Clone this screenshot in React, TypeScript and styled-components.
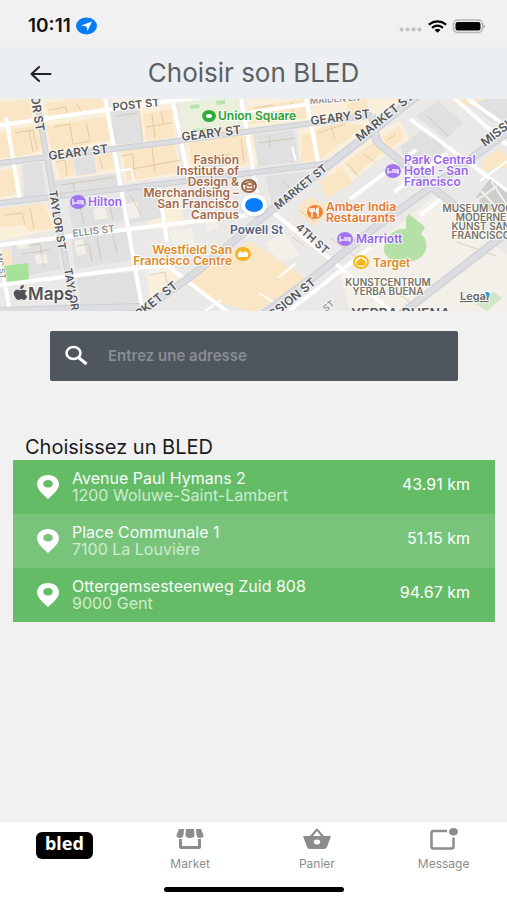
import React from "react";
import styled, { createGlobalStyle } from "styled-components";

const GlobalStyle = createGlobalStyle`
  * { box-sizing: border-box; }
  body { margin: 0; background: #f1f1f1; font-family: Inter, "Liberation Sans", sans-serif; }
  h1, h2, p, ul { margin: 0; padding: 0; font-weight: 400; }
  button { border: 0; padding: 0; background: none; font: inherit; color: inherit; cursor: pointer; }
`;

const Screen = styled.div`
  display: flex;
  flex-direction: column;
  min-height: 100vh;
  background: #f1f1f1;
`;

const StatusBar = styled.div`
  display: flex;
  align-items: center;
  justify-content: space-between;
  height: 47px;
  padding: 5px 21px 0 28px;
`;

const StatusGroup = styled.div`
  display: flex;
  align-items: center;
  gap: 5px;
`;

const Clock = styled.span`
  font-size: 19px;
  line-height: 20px;
  font-weight: 600;
  color: #111;
`;

const Header = styled.header`
  display: grid;
  grid-template-columns: 82px 1fr 82px;
  align-items: center;
  height: 52px;
  background: #eceff2;
  text-align: center;
`;

const BackButton = styled.button`
  display: flex;
  justify-content: center;
  color: #222;
`;

const Title = styled.h1`
  font-size: 26px;
  line-height: 32px;
  color: #5c5f63;
  white-space: nowrap;
`;

const MapFrame = styled.section`
  height: 212px;
  overflow: hidden;
`;

const MapSvg = styled.svg`
  display: block;
  width: 100%;
  height: 100%;
  font-family: Inter, "Liberation Sans", sans-serif;
`;

const Street = styled.text<{ $size?: number; $tone?: string }>`
  font-size: ${(p) => p.$size ?? 12}px;
  font-weight: 600;
  fill: ${(p) => p.$tone ?? "#55565a"};
  stroke: #fff;
  stroke-width: 2px;
  stroke-opacity: 0.7;
  paint-order: stroke;
`;

const Place = styled.text<{ $color: string; $size?: number }>`
  font-size: ${(p) => p.$size ?? 12}px;
  font-weight: 600;
  fill: ${(p) => p.$color};
  stroke: #fff;
  stroke-width: 2px;
  stroke-opacity: 0.8;
  paint-order: stroke;
`;

const SearchBox = styled.label`
  display: flex;
  align-items: center;
  gap: 18px;
  height: 50px;
  margin: 20px 49px 0 50px;
  padding: 0 14px;
  border-radius: 2px;
  background: #50565d;
  color: #fff;
`;

const SearchInput = styled.input`
  flex: 1;
  min-width: 0;
  border: 0;
  outline: 0;
  padding: 0;
  background: transparent;
  color: #fff;
  font: 600 15px/20px Inter, "Liberation Sans", sans-serif;
  &::placeholder { color: #868d97; opacity: 1; }
`;

const Results = styled.section`
  flex: 1;
  padding: 54px 12px 24px 13px;
`;

const ResultsTitle = styled.h2`
  padding-left: 12px;
  font-size: 20px;
  line-height: 25px;
  color: #1c1c1c;
`;

const ResultList = styled.ul`
  list-style: none;
`;

const ResultRow = styled.button<{ $light: boolean }>`
  display: flex;
  align-items: center;
  width: 100%;
  height: 54px;
  padding: 0 25px 0 21px;
  background: ${(p) => (p.$light ? "#79c47b" : "#64bc67")};
  color: #fff;
  text-align: left;
`;

const Address = styled.span`
  display: flex;
  flex-direction: column;
  flex: 1;
  min-width: 0;
  padding: 0 8px 1px 10px;
`;

const AddressLine = styled.span<{ $muted?: boolean }>`
  font-size: 16px;
  line-height: 17px;
  color: ${(p) => (p.$muted ? "#d0ebd0" : "#f7fcf7")};
`;

const Distance = styled.span`
  padding-bottom: 6px;
  font-size: 16px;
  line-height: 17px;
`;

const TabBar = styled.nav`
  display: flex;
  flex-direction: column;
  align-items: center;
  gap: 15px;
  height: 79px;
  padding-top: 6px;
  background: #fff;
  border-top: 1px solid #ebebeb;
`;

const Tabs = styled.div`
  display: grid;
  grid-template-columns: repeat(4, 1fr);
  width: 100%;
`;

const Tab = styled.button`
  display: flex;
  flex-direction: column;
  align-items: center;
  gap: 7px;
  height: 44px;
  color: #8c8c8c;
  font-size: 12px;
  line-height: 14px;
`;

const Logo = styled.span`
  display: block;
  width: 57px;
  height: 27px;
  margin: 4px 0 0 2px;
  border-radius: 6px;
  background: #000;
  color: #fff;
  font: 700 18px/23px "Noto Sans", "Open Sans", sans-serif;
  text-align: center;
`;

const HomeIndicator = styled.div`
  width: 180px;
  height: 5px;
  border-radius: 3px;
  background: #000;
`;

const plots = [
  "0,-5 105,-5 113,40 120,52 52,62 0,66",
  "0,70 20,66 22,98 0,101",
  "112,-5 172,-5 176,40 118,50",
  "52,62 112,54 120,86 60,94",
  "118,50 176,41 183,76 124,84",
  "0,110 46,104 56,130 0,142",
  "178,40 256,30 258,66 190,76",
  "244,-5 306,-5 310,24 248,28",
  "298,30 372,20 374,28 318,66 300,64",
  "310,-5 420,-5 372,18 314,24",
  "378,32 400,22 410,40 390,54",
  "328,74 370,40 388,54 340,92",
  "146,106 180,92 184,128 148,130",
  "146,168 170,164 184,180 150,206",
];
const tanBlocks = [
  "0,3 30,0 33,20 0,24", "12,30 38,26 43,51 16,58 10,54",
  "0,34 7,33 11,58 0,60", "45,5 60,2 103,-4 104,8 49,17",
  "46,27 60,24 106,18 110,41 52,52", "0,72 14,69 16,95 0,98",
  "54,62 73,60 74,76 61,79", "95,57 111,54 114,70 98,72",
  "0,109 44,104 54,129 30,133 25,126 0,128",
  "122,52 174,45 181,73 127,82", "143,15 172,10 174,38 146,42",
  "189,44 246,35 252,63 235,69 231,56 192,70",
  "184,32 204,29 237,27 243,31 187,39", "247,9 304,0 307,19 250,25",
  "302,36 312,34 315,61 301,63",
  "315,30 345,23 365,27 320,60", "345,5 367,-2 368,14 350,17",
  "382,38 400,27 404,39 389,50",
  "344,64 373,44 383,53 355,77", "320,84 342,67 353,84 326,100",
  "482,62 500,49 507,58 507,68 484,72", "451,2 478,-8 486,0 463,9",
  "187,180 250,142 306,180 256,213 218,204",
  "0,151 8,150 13,165 0,168",
  "299,106 309,98 330,108 315,127 300,117",
];
const greyBlocks = [
  "109,12 138,9 143,43 116,46", "23,65 42,63 46,98 24,100", "72,58 94,56 97,74 76,77",
  "50,82 116,74 119,91 53,99", "196,48 227,44 230,66 197,73",
  "253,36 294,31 299,63 258,67", "124,91 157,88 162,119 130,125",
  "67,106 125,98 128,121 73,130", "11,147 57,138 61,170 14,179",
  "71,139 130,132 135,160 75,170", "76,178 133,173 139,202 82,210",
  "265,77 310,73 288,91 272,105", "400,48 424,29 446,51 421,75",
  "416,17 438,2 463,24 446,40", "468,1 507,-6 507,27 489,22",
];
const lightBlocks = [
  "168,132 192,129 195,148 178,160", "202,113 215,111 218,128 207,133",
  "74,142 83,140 86,155 77,157", "126,105 137,102 140,118 129,120",
  "93,110 105,108 108,119 95,121", "17,140 29,137 30,149 17,150",
  "340,174 434,97 497,139 403,212 350,212", "410,212 497,148 507,156 507,212",
  "34,156 46,155 48,164 37,165", "266,145 284,132 300,157 278,162",
  "146,160 162,162 158,178 148,178", "392,76 414,58 430,70 402,90",
];
const buildingEdges =
  "M15 34l18-3 4 20M29 31l4 22M54 28l16-3 3 20 17-3-4-19M49 11l17-3 1 7M77 5l5 9M56 63l9-2 2 15M99 57l4 13M121 57l12-2 1 24M121 72l60-11M152 48l3 26M146 28l26-4M152 15l3 24M161 12l3 13M197 60l34-5M241 40l3 23M258 44l37-5M269 36l1 12M254 9l18-3 3 16M291 3l3 16M318 34l27-9M331 26l4 15M348 65l11 13M363 55l13 9M386 42l10-7M61 86l54-8M73 84l2 12M130 95l12 23M80 106l4 19M109 103l4 17M4 116l18-2 3 12M30 109l4 20M139 12l4 30M115 17l22-3M417 25l24 22M427 17l21 20M402 52l14 13M476 6l18 15M26 147l14-2 4 24M77 147l12-2 3 18M97 138l4 22M113 136l4 18M50 151l-28 4M150 176l15-3 3 18M300 112l15 11M292 138l12 8M331 139l30 23M383 184l31 22M457 143l39 14M283 82l8 8";

type Label = { x: number; y: number; r?: number; text: string; size?: number; tone?: string };
const streets: Label[] = [
  { x: 113, y: 12, r: -6, text: "POST ST", size: 11 },
  { x: 49, y: 61, r: -7, text: "GEARY ST" },
  { x: 182, y: 42, r: -7, text: "GEARY ST" },
  { x: 311, y: 26, r: -7, text: "GEARY ST" },
  { x: 26, y: -32, r: 81, text: "TAYLOR ST" },
  { x: 49, y: 92, r: 81, text: "TAYLOR ST", size: 11 },
  { x: 64, y: 170, r: 80, text: "TAYLOR", size: 11 },
  { x: 73, y: 138, r: -7, text: "ELLIS ST", size: 10, tone: "#929295" },
  { x: 310, y: 5, r: -4, text: "MAIDEN LN", size: 9, tone: "#929295" },
  { x: 278, y: 111, r: -39, text: "MARKET ST", size: 11 },
  { x: 360, y: 43, r: -39, text: "MARKET ST" },
  { x: 124, y: 232, r: -39, text: "MARKET ST" },
  { x: 295, y: 129, r: 42, text: "4TH ST", size: 11 },
  { x: 262, y: 229, r: -39, text: "MISSION ST" },
  { x: 485, y: 48, r: -38, text: "MISSION ST" },
  { x: -4, y: 155, r: 80, text: "MC ST", size: 8, tone: "#929295" },
  { x: 326, y: 213, r: -39, text: "ST", size: 9, tone: "#929295" },
  { x: 351, y: 220, text: "YERBA BUENA", size: 14 },
];

type Spot = { x: number; y: number; lines: string[]; color: string; anchor?: "start" | "end" | "middle"; step?: number; size?: number };
const spots: Spot[] = [
  { x: 218, y: 21, lines: ["Union Square"], color: "#2ba132" },
  { x: 88, y: 107, lines: ["Hilton"], color: "#9865ed" },
  { x: 239, y: 65, lines: ["Fashion", "Institute of", "Design &", "Merchandising –", "San Francisco", "Campus"], color: "#a36a4a", anchor: "end", step: 11 },
  { x: 404, y: 65, lines: ["Park Central", "Hotel - San", "Francisco"], color: "#9865ed" },
  { x: 326, y: 112, lines: ["Amber India", "Restaurants"], color: "#e9782f" },
  { x: 356, y: 144, lines: ["Marriott"], color: "#9865ed" },
  { x: 373, y: 168, lines: ["Target"], color: "#e18a26" },
  { x: 232, y: 155, lines: ["Westfield San", "Francisco Centre"], color: "#e18a26", anchor: "end" },
  { x: 230, y: 135, lines: ["Powell St"], color: "#536080", size: 12 },
  { x: 388, y: 187, lines: ["KUNSTCENTRUM", "YERBA BUENA"], color: "#77746a", anchor: "middle", step: 9, size: 10 },
  { x: 481, y: 113, lines: ["MUSEUM VOOR", "MODERNE", "KUNST SAN", "FRANCISCO"], color: "#77746a", anchor: "middle", step: 9, size: 10 },
];

const CityMap = () => (
  <MapSvg viewBox="0 0 507 212" preserveAspectRatio="xMidYMid slice" role="img" aria-label="Carte de San Francisco">
    <rect width="507" height="212" fill="#eae9e8" />
    <g fill="#f9efdb">{plots.map((p) => <polygon key={p} points={p} />)}</g>
    <g fill="#e1e0e1">{greyBlocks.map((p) => <polygon key={p} points={p} />)}</g>
    <g fill="#f2f0e8">{lightBlocks.map((p) => <polygon key={p} points={p} />)}</g>
    <g fill="#fae6c4">{tanBlocks.map((p) => <polygon key={p} points={p} />)}</g>
    <path d={buildingEdges} fill="none" stroke="#c2ab80" strokeOpacity=".45" strokeWidth="1" />
    <path d="M178-2l62-3 5 30-62 10z" fill="#ebf0dd" />
    <path d="M190 6l9-1 1 4-9 1zM216 2l9-1v4l-8 1zM193 30l13-1 1 3-13 1z" fill="#b9e2ae" />
    <path d="M4 167l24-3 1 18-23 3z" fill="#a6e398" />
    <path d="M406 119l3-4 16 13-4 7c10 8 6 24-8 27-14 4-29-1-29-12 1-13 10-21 22-20z" fill="#b5e0a7" />
    <path d="M474 204l20-11 8 6-15 13z" fill="#cfe8c3" />
    <g fill="none" stroke="#fff" strokeWidth="4">
      <path d="M0 26L170 2 240-6M0 146l130-16 127-15M0 186l135-17 40-3M6 18l14 84M-2 148l12 64M105-2l38 216M172-2l17 84M158 83l9 60M241-2l16 96M306-2l12 65M410 20l97 72M453-2l54 48M350 100l66-49M394 93l53-39M165 165l68 52M269 110l60 49 62 53M420 116l27-20M432 86l48 36M462 69l45-35M468 0l39 28M289 212l82-64M248 14l60-9" />
      <path d="M132 70l2 13 M118 72l14-2M292 48l4 14M480 82l27-20M296 164l-18 15M278 206l-19-12M205 212l16-11" strokeWidth="2" />
    </g>
    <g fill="none" strokeLinejoin="round">
      <path d="M0 64L170 43 372 16M0 104l170-20 160-20M36-2l39 216" stroke="#cdcfd3" strokeWidth="6" />
      <path d="M0 64L170 43 372 16M0 104l170-20 160-20M36-2l39 216" stroke="#dcdde0" strokeWidth="4" />
      <path d="M136 216l54-38 68-56 72-57 90-70M262 216l58-43 58-47 55-39 76-55M400 216l97-75 12-8M372 16l5 27 56 46 38 30M0 212l140-4" stroke="#cbcdd2" strokeWidth="8" />
      <path d="M136 216l54-38 68-56 72-57 90-70M262 216l58-43 58-47 55-39 76-55M400 216l97-75 12-8M372 16l5 27 56 46 38 30M0 212l140-4" stroke="#dcdde1" strokeWidth="6" />
    </g>
    <path d="M476 98l14-18 17 14v20l-20-4zM480 98l8-9 12 10-2 11z" fill="#cdcdca" />
    <path d="M481 92l19 20M491 82l16 24M477 101l20-14" stroke="#f1f1ee" strokeWidth="2" />

    {streets.map((s, i) => (
      <Street key={i} $size={s.size} $tone={s.tone} transform={`translate(${s.x} ${s.y}) rotate(${s.r ?? 0})`}>{s.text}</Street>
    ))}
    {spots.map((s) => (
      <Place key={s.lines[0]} $color={s.color} $size={s.size} textAnchor={s.anchor ?? "start"}>
        {s.lines.map((line, i) => (
          <tspan key={line} x={s.x} y={s.y + i * (s.step ?? 11)}>{line}</tspan>
        ))}
      </Place>
    ))}

    <ellipse cx="209" cy="17" rx="5" ry="4" fill="#fff" stroke="#32ad38" strokeWidth="4" />
    <g fill="#a274ed">
      <ellipse cx="78" cy="103" rx="8" ry="7" /><ellipse cx="393" cy="72" rx="8" ry="7" /><ellipse cx="345" cy="140" rx="8" ry="7" />
    </g>
    <path d="M73 100v6m0-2h10v2m0-2v-2h-6M388 69v6m0-2h10v2m0-2v-2h-6M340 137v6m0-2h10v2m0-2v-2h-6" fill="none" stroke="#eee5ff" strokeWidth="1.5" />
    <ellipse cx="249" cy="87" rx="7" ry="6" fill="#fff3e8" stroke="#9a6444" strokeWidth="2" />
    <path d="M244 85l6-2 5 2-5 2zM246 87v3h7v-3" fill="#fff3e8" stroke="#9a6444" strokeWidth="1.5" />
    <ellipse cx="315" cy="113" rx="8" ry="7" fill="#f18335" />
    <path d="M312 109v9m-2-9v3h4v-3m4 9v-9q-3 2-1 5" fill="none" stroke="#fff" strokeWidth="1.5" />
    <ellipse cx="243" cy="155" rx="8" ry="7" fill="#f3b324" />
    <path d="M238 158v-4l3-2 2 2 2-2 3 2v4z" fill="#fff" />
    <ellipse cx="361" cy="163" rx="7" ry="6" fill="#fff8e3" stroke="#f4b51b" strokeWidth="2" />
    <path d="M357 162h8v4h-8zM359 162c0-3 4-3 4 0" fill="#f4b51b" stroke="#f4b51b" />
    <ellipse cx="254" cy="107" rx="14" ry="12" fill="#b7bcc8" opacity=".35" />
    <ellipse cx="254" cy="106" rx="13" ry="11" fill="#fff" />
    <ellipse cx="254" cy="106" rx="9" ry="7" fill="#087dfc" />

    <path d="M25 191c-3-1-4 1-6 0-3-1-6 1-5 5 1 3 3 5 5 5l2-1 3 1c2 0 3-3 3-4-2-1-3-4 0-5zM20 190c0-2 1-4 4-4 0 2-1 4-4 4z" fill="#515258" />
    <Place x="28" y="201" $color="#515258" $size={17}>Maps</Place>
    <a href="#legal"><Place x="460" y="201" $color="#66676b" $size={11} textDecoration="underline">Legal</Place></a>
    <path d="M485 193l5 1-2 6" fill="#2d9fe0" />
  </MapSvg>
);

const LocationIcon = () => (
  <svg width="28" height="26" viewBox="0 0 28 26" aria-hidden="true">
    <path d="M14 1C7.500 1 3 5 3 10.500c0 5 6 10 11 14.500 5-4.500 11-9.500 11-14.500C25 5 20.500 1 14 1zm0 12.500c-2.800 0-4.800-1.600-4.800-3.700S11.200 6 14 6s4.800 1.700 4.800 3.800-2 3.700-4.800 3.700z" fill="#fff" fillRule="evenodd" />
  </svg>
);

const MarketIcon = () => (
  <svg width="28" height="22" viewBox="0 0 28 22" fill="#8c8c8c" aria-hidden="true">
    <path d="M3 1h5L7.500 7Q7 10 4 10 0 10 .5 7zM10 1h8l.5 6q0 3-4.500 3T9.500 7zM20 1h5l2.500 6q.5 3-3.500 3-3 0-3.500-3z" />
    <path d="M3 11h3v7h16v-7h3v8q0 2-2 2H5q-2 0-2-2z" />
  </svg>
);

const BasketIcon = () => (
  <svg width="28" height="22" viewBox="0 0 28 22" fill="#8c8c8c" aria-hidden="true">
    <path fillRule="evenodd" d="M0 8h7l6-7q1-1 2 0l6 7h7l-4 11q-.5 2-3 2H7q-2.500 0-3-2zM10 8h8l-4-5zM14 11.500c-2 0-3.300 1-3.300 2.500s1.300 2.500 3.300 2.500 3.300-1 3.300-2.500-1.300-2.500-3.300-2.500z" />
  </svg>
);

const MessageIcon = () => (
  <svg width="28" height="22" viewBox="0 0 28 22" aria-hidden="true">
    <path d="M17 3H3.500Q1.500 3 1.500 5v13.500q0 2 2 2h18q2 0 2-2V9.500" fill="none" stroke="#8c8c8c" strokeWidth="2.500" />
    <ellipse cx="23.500" cy="3.800" rx="4.500" ry="3.800" fill="#8c8c8c" />
  </svg>
);

const places = [
  { street: "Avenue Paul Hymans 2", city: "1200 Woluwe-Saint-Lambert", distance: "43.91 km" },
  { street: "Place Communale 1", city: "7100 La Louvière", distance: "51.15 km" },
  { street: "Ottergemsesteenweg Zuid 808", city: "9000 Gent", distance: "94.67 km" },
];

const tabs = [
  { label: "Market", Icon: MarketIcon },
  { label: "Panier", Icon: BasketIcon },
  { label: "Message", Icon: MessageIcon },
];

export default function App() {
  return (
    <Screen>
      <GlobalStyle />
      <StatusBar>
        <StatusGroup>
          <Clock>10:11</Clock>
          <svg width="21" height="18" viewBox="0 0 21 18" aria-hidden="true">
            <ellipse cx="10.500" cy="9" rx="10.500" ry="8.500" fill="#087cf7" />
            <path d="M16 4.500L11.500 14l-1-4.500L5 8.500z" fill="#fff" />
          </svg>
        </StatusGroup>
        <StatusGroup>
          <svg width="24" height="14" viewBox="0 0 24 14" aria-hidden="true">
            <g fill="#c1c1c1"><circle cx="2.500" cy="10.500" r="2" /><circle cx="8.500" cy="10.500" r="2" /><circle cx="14.500" cy="10.500" r="2" /><circle cx="20.500" cy="10.500" r="2" /></g>
          </svg>
          <svg width="19" height="13" viewBox="0 0 19 13" aria-hidden="true">
            <g fill="none" stroke="#050505" strokeWidth="2.200"><path d="M.8 4.700Q9.500-1.800 18.200 4.700" /><path d="M4 7.800Q9.500 3.600 15 7.800" /></g>
            <path d="M6.500 10Q9.500 7.600 12.500 10l-3 2.800z" fill="#050505" />
          </svg>
          <svg width="34" height="15" viewBox="0 0 34 15" aria-hidden="true">
            <rect x="1.500" y="1" width="29" height="12.500" rx="4" fill="#f1f1f1" stroke="#b5b5b5" strokeWidth="1.500" />
            <rect x="3.500" y="3" width="25" height="8.500" rx="2" fill="#050505" />
            <path d="M31.500 5q3 2.200 0 4.500z" fill="#aaa" />
          </svg>
        </StatusGroup>
      </StatusBar>
      <Header>
        <BackButton aria-label="Retour">
          <svg width="22" height="18" viewBox="0 0 22 18" fill="none" stroke="currentColor" strokeWidth="2" strokeLinecap="round" strokeLinejoin="round" aria-hidden="true">
            <path d="M20.500 10h-19M9 3L1.500 10 9 17" />
          </svg>
        </BackButton>
        <Title>Choisir son BLED</Title>
      </Header>
      <MapFrame><CityMap /></MapFrame>
      <SearchBox>
        <svg width="26" height="22" viewBox="0 0 26 22" fill="none" stroke="currentColor" strokeWidth="2.500" aria-hidden="true">
          <ellipse cx="9.500" cy="8" rx="7" ry="6" /><path d="M14.500 12.500l8 6.500" strokeWidth="3" />
        </svg>
        <SearchInput type="text" placeholder="Entrez une adresse" aria-label="Entrez une adresse" />
      </SearchBox>
      <Results>
        <ResultsTitle>Choisissez un BLED</ResultsTitle>
        <ResultList>
          {places.map((place, i) => (
            <li key={place.street}>
              <ResultRow $light={i % 2 === 1}>
                <LocationIcon />
                <Address>
                  <AddressLine>{place.street}</AddressLine>
                  <AddressLine $muted>{place.city}</AddressLine>
                </Address>
                <Distance>{place.distance}</Distance>
              </ResultRow>
            </li>
          ))}
        </ResultList>
      </Results>
      <TabBar>
        <Tabs>
          <Tab><Logo>bled</Logo></Tab>
          {tabs.map(({ label, Icon }) => (
            <Tab key={label}><Icon />{label}</Tab>
          ))}
        </Tabs>
        <HomeIndicator />
      </TabBar>
    </Screen>
  );
}
